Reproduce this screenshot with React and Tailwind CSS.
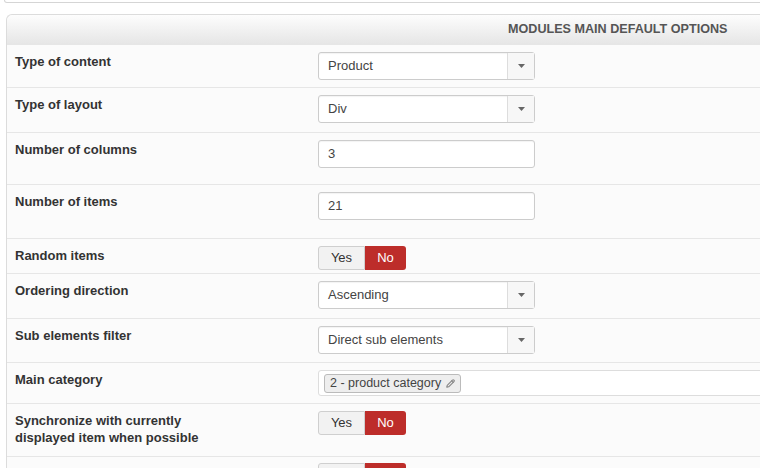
import { Pencil } from "lucide-react";

const font = { fontFamily: '"Liberation Sans", Arial, sans-serif' };

function Select({ value }) {
  return (
    <div className="flex h-[28px] w-[217px] rounded-[3px] border border-[#cccccc] bg-white shadow-[inset_0_1px_1px_rgba(0,0,0,0.05)]">
      <div className="flex flex-1 items-center pl-[9px] text-[13px] text-[#444]">{value}</div>
      <div className="flex w-[27px] items-center justify-center border-l border-[#dddddd] bg-[#f7f7f7]">
        <svg width="7" height="4" viewBox="0 0 7 4">
          <path d="M0 0h7L3.5 4z" fill="#666" />
        </svg>
      </div>
    </div>
  );
}

function TextInput({ value }) {
  return (
    <div className="flex h-[28px] w-[217px] items-center rounded-[3px] border border-[#cccccc] bg-white pl-[9px] text-[13px] text-[#444] shadow-[inset_0_1px_1px_rgba(0,0,0,0.05)]">
      {value}
    </div>
  );
}

function Toggle() {
  return (
    <div className="flex h-[24px] text-[13px]">
      <div className="flex w-[47px] items-center justify-center rounded-l-[3px] border border-[#cfcfcf] bg-[#f2f2f2] text-[#333]">
        Yes
      </div>
      <div className="flex w-[41px] items-center justify-center rounded-r-[3px] bg-[#bd2d2a] text-white">No</div>
    </div>
  );
}

function Category() {
  return (
    <div className="flex h-[26px] w-[460px] items-center rounded-[3px] border border-[#dddddd] bg-white pl-[5px]">
      <div className="flex h-[19px] items-center gap-[5px] rounded-[3px] border border-[#bbbbbb] bg-[#eeeeee] px-[5px] text-[12.5px] text-[#444]">
        2 - product category
        <Pencil size={9} strokeWidth={3} className="text-[#888]" />
      </div>
    </div>
  );
}

const rows = [
  { label: "Type of content", h: 43, el: <Select value="Product" /> },
  { label: "Type of layout", h: 45, el: <Select value="Div" /> },
  { label: "Number of columns", h: 52, el: <TextInput value="3" /> },
  { label: "Number of items", h: 54, el: <TextInput value="21" /> },
  { label: "Random items", h: 35, el: <Toggle />, pt: 7 },
  { label: "Ordering direction", h: 45, el: <Select value="Ascending" /> },
  { label: "Sub elements filter", h: 44, el: <Select value="Direct sub elements" /> },
  { label: "Main category", h: 41, el: <Category /> },
  { label: "Synchronize with currently displayed item when possible", h: 53, el: <Toggle />, pt: 7 },
  { label: "Keep current item displayed on the front", h: 40, el: <Toggle />, pt: 6 },
];

export default function App() {
  return (
    <div className="h-[468px] w-[760px] overflow-hidden bg-white" style={font}>
      <div className="ml-[4px] h-[3px] w-[820px] rounded-b-[4px] border border-t-0 border-[#d5d5d5]" />
      <div className="ml-[6px] mt-[11px] w-[820px] rounded-tl-[6px] border-l border-t border-[#dcdcdc] bg-[#fbfbfb]">
        <div className="flex h-[29px] items-center rounded-tl-[6px] bg-gradient-to-b from-[#fdfdfd] to-[#e6e6e6] pl-[501px] text-[12.6px] font-bold text-[#555]">
          MODULES MAIN DEFAULT OPTIONS
        </div>
        {rows.map((r) => (
          <div
            key={r.label}
            className="flex border-t border-[#e6e6e6]"
            style={{ height: r.h }}
          >
            <div className="w-[311px] shrink-0 pl-[8px] pt-[8px] text-[13px] font-bold leading-[17px] text-[#333]">
              <div className="w-[200px]">{r.label}</div>
            </div>
            <div style={{ paddingTop: r.pt ?? 7 }}>{r.el}</div>
          </div>
        ))}
      </div>
    </div>
  );
}
